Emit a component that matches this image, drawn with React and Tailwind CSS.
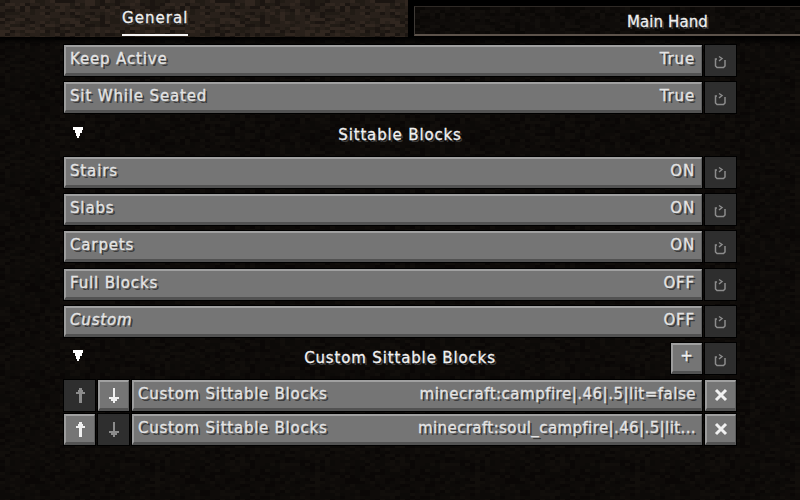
import React from 'react';

// dirt tile, seeded so every run looks the same
const tileCells = (() => {
    const cells = [];
    let seed = 1337;
    for (let y = 0; y < 32; y++) {
        for (let x = 0; x < 32; x++) {
            seed = (seed * 16807) % 2147483647;
            const v = seed % 100;
            const fill = v < 25 ? '#372c24' : v < 55 ? '#2e251e' : v < 82 ? '#261f19' : '#1f1814';
            cells.push(<rect key={`${x}-${y}`} x={x * 5} y={y * 3} width="5" height="3" fill={fill} />);
        }
    }
    return cells;
})();

const DirtTexture = ({ id, shade = 0 }) => (
    <svg className="absolute inset-0 w-full h-full" shapeRendering="crispEdges" aria-hidden="true">
        <defs>
            <pattern id={id} width="160" height="96" patternUnits="userSpaceOnUse">{tileCells}</pattern>
        </defs>
        <rect width="100%" height="100%" fill={`url(#${id})`} />
        <rect width="100%" height="100%" fill="#000" opacity={shade} />
    </svg>
);

const ResetIcon = ({ color = '#8c8c8c' }) => (
    <svg width="13" height="14" viewBox="0 0 13 14" fill="none" stroke={color} strokeWidth="1.5" className="mt-[2px]">
        <path d="M3 4H1.5V11L3 12.5H9.5L11 11V5" />
        <path d="M5 1.5L8 3.5L5 6" />
    </svg>
);

const ArrowIcon = ({ down, color }) => (
    <svg width="12" height="15" viewBox="0 0 12 15" fill={color} shapeRendering="crispEdges" className={down ? 'rotate-180' : ''}>
        <rect x="5" y="0" width="2.5" height="15" />
        <rect x="3.5" y="2" width="5.5" height="2" />
        <rect x="1.5" y="4" width="9.5" height="2" />
    </svg>
);

const Triangle = () => (
    <svg width="11" height="12" viewBox="0 0 11 12" fill="#fff" shapeRendering="crispEdges" className="ml-[9px] mb-[5px]">
        <rect x="0" y="0" width="10" height="3" />
        <rect x="1.5" y="3" width="7" height="3" />
        <rect x="3" y="6" width="4" height="3" />
        <rect x="4" y="9" width="2" height="2" />
    </svg>
);

const Cross = () => (
    <svg width="14" height="14" viewBox="0 0 14 14" fill="none" stroke="#f0f0f0" strokeWidth="3">
        <path d="M2 2L12 12M12 2L2 12" />
    </svg>
);

const Btn = ({ className = '', children }) => (
    <div className={`h-[31px] flex items-center bg-[#757575] border-t-2 border-l-2 border-b-[3px] border-r border-t-[#a0a0a0] border-l-[#9c9c9c] border-b-[#525252] border-r-[#5e5e5e] shadow-[0_0_0_1px_#000] ${className}`}>
        {children}
    </div>
);

const OffBtn = ({ className = '', children }) => (
    <div className={`h-[31px] flex items-center justify-center bg-[#2e2e2e] shadow-[0_0_0_1px_#000] ${className}`}>
        {children}
    </div>
);

const Reset = () => <OffBtn className="w-[31px] shrink-0"><ResetIcon /></OffBtn>;

const OptionRow = ({ label, value, italic }) => (
    <div className="flex gap-[3px] h-[31px]">
        <Btn className="flex-1 justify-between px-[4px] pb-[1px] text-[#e4e4e4]">
            <span className={italic ? 'italic' : ''}>{label}</span>
            <span className="pr-[2px] ">{value}</span>
        </Btn>
        <Reset />
    </div>
);

const Section = ({ title, children }) => (
    <div className="grid grid-cols-[1fr_auto_1fr] items-center h-[31px] text-[#f2f2f2]">
        <Triangle />
        <span>{title}</span>
        <div className="flex justify-end gap-[3px]">{children}</div>
    </div>
);

const ListRow = ({ value, upOn, valueClass }) => (
    <div className="flex gap-[3px] h-[31px]">
        {upOn
            ? <Btn className="w-[31px] justify-center"><ArrowIcon color="#f0f0f0" /></Btn>
            : <OffBtn className="w-[31px]"><ArrowIcon color="#8c8c8c" /></OffBtn>}
        {upOn
            ? <OffBtn className="w-[31px]"><ArrowIcon down color="#8c8c8c" /></OffBtn>
            : <Btn className="w-[31px] justify-center"><ArrowIcon down color="#f0f0f0" /></Btn>}
        <Btn className="flex-1 justify-between pl-[4px] pr-[5px] pb-[1px] text-[#e4e4e4]">
            <span className="tracking-[0.75px]">Custom Sittable Blocks</span>
            <span className={valueClass}>{value}</span>
        </Btn>
        <Btn className="w-[31px] justify-center"><Cross /></Btn>
    </div>
);

export default function App() {
    return (
        <div className="relative w-[800px] h-[500px] overflow-hidden bg-[#120e0c] font-['DejaVu_Sans',sans-serif] text-[15px] tracking-[0.85px] leading-none [-webkit-text-stroke:0.3px] [text-shadow:2px_2px_0_#3b3b3b]">
            {/* Tabs */}
            <header className="relative flex h-[37px] bg-black">
                <div className="relative w-[408px] shrink-0 pl-[122px]">
                    <DirtTexture id="tab-lit" shade={0.12} />
                    <div className="relative inline-flex flex-col w-[66px] h-full pt-[11px] text-[#f0f0f0] whitespace-nowrap tracking-[1.05px]">
                        <span>General</span>
                        <span className="absolute left-0 right-0 bottom-[1px] h-[2px] bg-[#f4f4f4]" />
                    </div>
                </div>
                <div className="relative flex-1 ml-[6px] mt-[6px] h-[30px] border-t border-l border-t-[#2e2925] border-l-[#3d3935] border-b-2 border-b-[#5c524a] overflow-hidden">
                    <DirtTexture id="tab-off" shade={0.66} />
                    <span className="absolute left-[212px] top-[8px] text-[#f0f0f0] whitespace-nowrap tracking-[0.1px]">Main Hand</span>
                </div>
            </header>

            {/* Options list */}
            <main className="relative h-[463px] px-[64px] pt-[8px]">
                <DirtTexture id="list-bg" shade={0.68} />
                <div className="absolute inset-x-0 top-0 h-[8px] bg-gradient-to-b from-black to-transparent" />
                <div className="relative flex flex-col gap-[6.25px]">
                    <OptionRow label="Keep Active" value="True" />
                    <OptionRow label="Sit While Seated" value="True" />
                    <Section title="Sittable Blocks" />
                    <OptionRow label="Stairs" value="ON" />
                    <OptionRow label="Slabs" value="ON" />
                    <OptionRow label="Carpets" value="ON" />
                    <OptionRow label="Full Blocks" value="OFF" />
                    <OptionRow label="Custom" value="OFF" italic />
                    <Section title="Custom Sittable Blocks">
                        <Btn className="w-[31px] justify-center text-[#f0f0f0] pb-[3px]">+</Btn>
                        <Reset />
                    </Section>
                    <div className="flex flex-col gap-[3px]">
                        <ListRow value="minecraft:campfire|.46|.5|lit=false" valueClass="tracking-[0.5px]" />
                        <ListRow value="minecraft:soul_campfire|.46|.5|lit..." valueClass="tracking-[0.4px]" upOn />
                    </div>
                </div>
            </main>
        </div>
    );
}
